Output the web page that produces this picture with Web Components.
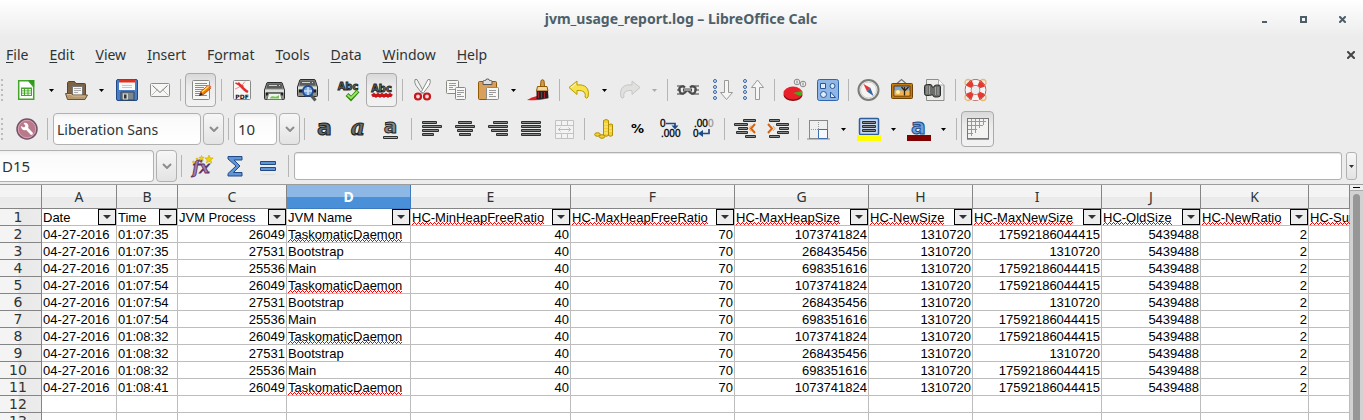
<!DOCTYPE html>
<html lang="en">
<head>
<meta charset="utf-8">
<title>jvm_usage_report.log – LibreOffice Calc</title>
<style>
  html, body { margin: 0; height: 100%; overflow: hidden; background: #ececec; }
  body { font: 14px/18px "Noto Sans", "Open Sans", sans-serif; color: #2e3436; }
</style>
</head>
<body>
<calc-window>
  <calc-titlebar slot="title">jvm_usage_report.log – LibreOffice Calc</calc-titlebar>
  <calc-menubar slot="menu"></calc-menubar>

  <calc-toolbar slot="bars" label="Standard">
    <calc-grip></calc-grip>
    <calc-button icon="new" label="New"></calc-button><calc-more label="New options"></calc-more>
    <calc-button icon="open" label="Open"></calc-button><calc-more label="Recent files"></calc-more>
    <calc-button icon="save" label="Save"></calc-button>
    <calc-button icon="mail" label="Send as email"></calc-button>
    <calc-sep></calc-sep>
    <calc-button icon="edit" label="Edit mode" active></calc-button>
    <calc-sep></calc-sep>
    <calc-button icon="pdf" label="Export as PDF"></calc-button>
    <calc-button icon="print" label="Print"></calc-button>
    <calc-button icon="preview" label="Print preview"></calc-button>
    <calc-sep></calc-sep>
    <calc-button icon="spell" label="Spelling"></calc-button>
    <calc-button icon="autospell" label="Automatic spell checking" active></calc-button>
    <calc-sep></calc-sep>
    <calc-button icon="cut" label="Cut"></calc-button>
    <calc-button icon="copy" label="Copy"></calc-button>
    <calc-button icon="paste" label="Paste"></calc-button><calc-more label="Paste options"></calc-more>
    <calc-button icon="brush" label="Clone formatting"></calc-button>
    <calc-sep></calc-sep>
    <calc-button icon="undo" label="Undo"></calc-button><calc-more label="Undo history"></calc-more>
    <calc-button icon="redo" label="Redo"></calc-button><calc-more label="Redo history" dim></calc-more>
    <calc-sep></calc-sep>
    <calc-button icon="link" label="Hyperlink"></calc-button>
    <calc-button icon="sortdown" label="Sort descending"></calc-button>
    <calc-button icon="sortup" label="Sort ascending"></calc-button>
    <calc-sep></calc-sep>
    <calc-button icon="chart" label="Insert chart"></calc-button>
    <calc-button icon="draw" label="Show draw functions"></calc-button>
    <calc-sep></calc-sep>
    <calc-button icon="compass" label="Navigator"></calc-button>
    <calc-button icon="gallery" label="Gallery"></calc-button>
    <calc-button icon="find" label="Find and replace"></calc-button>
    <calc-sep></calc-sep>
    <calc-button icon="help" label="Help"></calc-button>
  </calc-toolbar>

  <calc-toolbar slot="bars" label="Formatting" class="format">
    <calc-grip></calc-grip>
    <calc-button icon="wrench" label="Styles and formatting"></calc-button>
    <calc-sep></calc-sep>
    <calc-combo label="Font name" value="Liberation Sans" style="--w:148px"></calc-combo>
    <calc-sep></calc-sep>
    <calc-combo label="Font size" value="10" style="--w:43px;--size:15px"></calc-combo>
    <calc-sep></calc-sep>
    <calc-button icon="bold" label="Bold"></calc-button>
    <calc-button icon="italic" label="Italic"></calc-button>
    <calc-button icon="underline" label="Underline"></calc-button>
    <calc-sep></calc-sep>
    <calc-button icon="left" label="Align left"></calc-button>
    <calc-button icon="center" label="Center"></calc-button>
    <calc-button icon="right" label="Align right"></calc-button>
    <calc-button icon="justify" label="Justify"></calc-button>
    <calc-button icon="merge" label="Merge cells"></calc-button>
    <calc-sep></calc-sep>
    <calc-button icon="currency" label="Currency"></calc-button>
    <calc-button icon="percent" label="Percent"></calc-button>
    <calc-button icon="adddec" label="Add decimal place"></calc-button>
    <calc-button icon="deldec" label="Delete decimal place"></calc-button>
    <calc-sep></calc-sep>
    <calc-button icon="outdent" label="Decrease indent"></calc-button>
    <calc-button icon="indent" label="Increase indent"></calc-button>
    <calc-sep></calc-sep>
    <calc-button icon="borders" label="Borders"></calc-button><calc-more label="Border styles"></calc-more>
    <calc-button icon="fill" label="Background color"></calc-button><calc-more label="Background colors"></calc-more>
    <calc-button icon="color" label="Font color"></calc-button><calc-more label="Font colors"></calc-more>
    <calc-sep></calc-sep>
    <calc-button icon="grid" label="Toggle grid lines" active large></calc-button>
  </calc-toolbar>

  <calc-toolbar slot="bars" label="Formula" class="formula">
    <calc-combo label="Name box" value="D15" flush style="--w:154px;--size:15px"></calc-combo>
    <calc-sep></calc-sep>
    <calc-button icon="fx" label="Function wizard"></calc-button>
    <calc-button icon="sum" label="Sum"></calc-button>
    <calc-button icon="equals" label="Function"></calc-button>
    <calc-sep></calc-sep>
    <calc-input></calc-input>
  </calc-toolbar>

  <calc-sheet></calc-sheet>
</calc-window>

<script>
const define = (name, html, setup) => {
  const template = document.createElement('template');
  template.innerHTML = html;
  customElements.define(name, class extends HTMLElement {
    connectedCallback() {
      if (this.shadowRoot) return;
      const root = this.attachShadow({ mode: 'open' });
      root.append(template.content.cloneNode(true));
      if (setup) setup(this, root);
    }
  });
};

/* ---------- icon set, drawn on a 25 x 24 grid ---------- */
const bars = rows => rows.map(([x, y, w]) =>
  `<rect x="${x}" y="${y}" width="${w}" height="3" rx="1" fill="#2b2e2f"/><rect x="${x + 1}" y="${y + 1}" width="${w - 2}" height="1" fill="#858886"/>`).join('');
const page = (x, y, w, h) => `<rect x="${x + .5}" y="${y + .5}" width="${w - 1}" height="${h - 1}" rx="1" fill="#f7f7f5" stroke="#888a85"/>`;
const lines = (x, y, w, n, c = '#999') => Array.from({ length: n }, (_, i) => `<path d="M${x} ${y + i * 2 + .5}h${i % 3 === 2 ? w - 3 : w}" stroke="${c}"/>`).join('');
const printer = `<path d="M4.500 4q0-1.500 1.500-1.500h13q1.500 0 1.500 1.500l2 6v8.500q0 1-1 1h-18q-1 0-1-1v-8.500z" fill="#8f918d" stroke="#2b2d2c"/><path d="M5.500 3.500h14l1 5h-16z" fill="#5a5d5b"/><path d="M7 5.500h8M17 5.500h1" stroke="#d0d2ce"/><path d="M3 9.500h19v3h-19z" fill="#dcdedb"/><path d="M4 12.500h17v3h-17z" fill="#1d1e1e"/>`;
const sortDots = x => [3, 9, 14, 20].map(y => `<circle cx="${x}" cy="${y}" r="1.500" fill="#dfeaf6" stroke="#3465a4"/>`).join('');
const letter = (extra, fill = '#666a69', stroke = '#1c1e1e', size = 22, y = 18) =>
  `<text x="12.500" y="${y}" text-anchor="middle" font-family="DejaVu Sans" font-weight="700" font-size="${size}" fill="${fill}" stroke="${stroke}" stroke-width="1" ${extra}>a</text>`;
const abc = (x, y) => `<text x="${x}" y="${y}" text-anchor="middle" font-family="DejaVu Sans Condensed, DejaVu Sans" font-weight="700" font-size="11" fill="#777a78" stroke="#1d1f1f" stroke-width=".9">Abc</text>`;

const icons = {
  new: `<path d="M4.700 2.700h10l5 6v12.500h-15z" fill="#fff" stroke="#43a62a" stroke-width="1.500"/><path d="M14 2h6.500v7z" fill="#2e9b1c"/><path d="M7 9.500h11v8.500h-11z" fill="#43a62a"/><path d="M8 11h2v1.500h-2zM11 11h2.500v1.500h-2.500zM14.500 11h2.500v1.500h-2.500zM8 13.300h2v1.400h-2zM11 13.300h2.500v1.400h-2.500zM14.500 13.300h2.500v1.400h-2.500zM8 15.600h2v1.400h-2zM11 15.600h2.500v1.400h-2.500zM14.500 15.600h2.500v1.400h-2.500z" fill="#e6f7df"/>`,
  open: `<path d="M3.500 19.500v-15l1-1h6l1.500 2h8.500q1 0 1 1v13z" fill="#7d6343" stroke="#5a4529"/><path d="M8.500 8.500h10v10h-10z" fill="#f5f5f3" stroke="#777"/>${lines(10, 10, 7, 3, '#aaa')}<path d="M1.500 15.500h6l1.500 1.500h14.500l-2.500 4.500h-17.500z" fill="#b79a70" stroke="#6b5335"/><path d="M3 16.500h4l1.500 1.500h13" fill="none" stroke="#d5be98"/>`,
  save: `<rect x="2.500" y="1.500" width="21" height="21" rx="1.500" fill="#4a7ec4" stroke="#204a87"/><path d="M5 2h16v10h-16z" fill="#fafafa"/><path d="M5 1.500h16v3h-16z" fill="#e0301e"/><path d="M8 7.500h10M8 9.500h10" stroke="#c5c5c5"/><path d="M7 14h13v8h-13z" fill="#7c8790" stroke="#38424c"/><path d="M9 15.500h5v6h-5z" fill="#d3d7cf"/><path d="M10 16.500h2.500v4h-2.500z" fill="#2e3436"/>`,
  mail: `<rect x="3.500" y="5.500" width="19" height="13" rx="1" fill="#f6f6f4" stroke="#8d8f8b"/><path d="M4.500 17.500l6-6M21.500 17.500l-6-6" stroke="#bbb"/><path d="M5.500 7.500l7.500 7 7.500-7" fill="none" stroke="#777"/>`,
  edit: `${page(4, 2, 18, 20)}${lines(7, 5, 12, 7, '#8b8d8a')}<path d="M11.500 17.500l1.500-4 7-6 2.500 3-7 6z" fill="#f57900" stroke="#a33c00" stroke-width=".8"/><path d="M14 14l7-6" stroke="#fce94f" stroke-width="1.200"/><path d="M11 18l2-3.500 1.500 2z" fill="#222"/><path d="M20 7.500l1.500-1 2 2.500-1.500 1.500z" fill="#e56a6a"/>`,
  pdf: `${page(4, 2, 18, 20)}<path d="M6.500 5l8 3.500" fill="none" stroke="#df3131" stroke-width="1.500"/><path d="M16 3.500c-2.500 4-6 6-10 7.500" fill="none" stroke="#ee8a8a"/><path d="M9 5c3 3 6 7 10 9" fill="none" stroke="#e02f2f" stroke-width="2.500"/><text x="13" y="20.500" text-anchor="middle" font-family="DejaVu Sans" font-weight="700" font-size="6" fill="#111">PDF</text>`,
  print: `<g transform="translate(0 2)">${printer}<path d="M6.500 13.500h12l1.500 6h-15z" fill="#eef4ea" stroke="#777"/><path d="M8 18c3-4 5 1 9-3v3.500h-9z" fill="#7bc257"/></g>`,
  preview: `<g transform="translate(0 -1)">${printer}</g><path d="M15 16l5.500 6.500" stroke="#555753" stroke-width="3"/><circle cx="13" cy="13" r="5" fill="#77a7dc" stroke="#1f4d91" stroke-width="2"/><path d="M9 13h8M13 9v8" stroke="#cfe2f5" stroke-width="1.500"/>`,
  spell: `${abc(12, 12)}<path d="M11 16.500l4 4 7-7.500" fill="none" stroke="#2f8a09" stroke-width="4"/><path d="M11.500 17l3.500 3 6.500-6.500" fill="none" stroke="#9be86a" stroke-width="1.800"/>`,
  autospell: `${abc(12.5, 14)}<path d="M3 18l2-1.500 2 1.500 2-1.500 2 1.500 2-1.500 2 1.500 2-1.500 2 1.500 2-1.500 2 1.500" fill="none" stroke="#c8141b" stroke-width="3"/>`,
  cut: `<path d="M5 1.500q-1 3 1 6l6 8 1.500-2-6.500-12z" fill="#f3f3f3" stroke="#8a8c88"/><path d="M20 1.500q1 3-1 6l-6 8-1.500-2 6.500-12z" fill="#fff" stroke="#8a8c88"/><circle cx="8" cy="18.500" r="3" fill="#f7dada" stroke="#c4161c" stroke-width="2.200"/><circle cx="17" cy="18.500" r="3" fill="#f7dada" stroke="#c4161c" stroke-width="2.200"/>`,
  copy: `${page(3, 2, 13, 14)}${lines(6, 5, 7, 4)}${page(12, 9, 11, 13)}${lines(14, 12, 7, 4)}`,
  paste: `<rect x="2.500" y="3.500" width="18" height="18" rx="1" fill="#d9a05b" stroke="#8f5902"/><path d="M7 3.500q0-1 1.500-1h1q0-1.500 2-1.500t2 1.500h1q1.500 0 1.500 1v3h-9z" fill="#ddd" stroke="#555"/>${page(10, 9, 13, 13)}${lines(13, 12, 7, 4)}`,
  brush: `<path d="M1 22q5-3 10-4l8 3q-8 2-18 1z" fill="#e31b23"/><path d="M15 2.500q1.500-1.500 3 0l.5 6h-4z" fill="#d99a4e" stroke="#8f5902"/><path d="M11.500 8.500h9.500l1 4.500h-11.500z" fill="#f0d8a8" stroke="#8f5902"/><path d="M10.500 13h11.500l.5 7q-1 1-12 1z" fill="#2a2023"/><path d="M12.500 14v6M15.500 14v6M18.500 14v6" stroke="#a22"/>`,
  undo: `<path d="M2 9.500l8-6.500v4c8-1 13 3 11 12q-1 2.500-3 0c1-4-1-7-8-6.500v4z" fill="#f7e14c" stroke="#b59a06" stroke-linejoin="round"/><path d="M4 9.500l5-4" stroke="#fffbd0"/>`,
  redo: `<path d="M23 9.500l-8-6.500v4c-8-1-13 3-11 12q1 2.500 3 0c-1-4 1-7 8-6.500v4z" fill="#e0e0df" stroke="#c6c6c5" stroke-linejoin="round"/>`,
  link: `<path d="M2 8h7M2 12h4M2 16h7M16 8h8M19 12h5M16 16h8" stroke="#777" stroke-width="1.300"/><g fill="none"><path d="M10 9.500q-2-2-4.500-.5t0 6q2.500 1.500 4.500-.5l2-2.500M15 9.500q2-2 4.500-.5t0 6q-2.500 1.500-4.500-.5l-2-2.500" stroke="#4a4c4b" stroke-width="2.200"/><path d="M8 12h9" stroke="#4a4c4b" stroke-width="3"/><path d="M9 12h7" stroke="#ddd"/></g>`,
  sortdown: `${sortDots(7)}<path d="M16.500 2.500h4v12h4l-6 7-6-7h4z" fill="#f6f6f5" stroke="#999b97" stroke-linejoin="round"/>`,
  sortup: `${sortDots(4)}<path d="M14.500 21.500h4v-12h4l-6-7.500-6 7.500h4z" fill="#f6f6f5" stroke="#999b97" stroke-linejoin="round"/>`,
  chart: `<ellipse cx="11" cy="17" rx="9.500" ry="6" fill="#8e0b10"/><ellipse cx="11" cy="15" rx="9.500" ry="6.500" fill="#e8202a"/><path d="M11 15l9-2q1 3-1.500 5z" fill="#3fae1c"/><circle cx="15" cy="4" r="2.800" fill="#f2f2f2" stroke="#888"/><circle cx="21" cy="6" r="2.800" fill="#f2f2f2" stroke="#888"/><path d="M15 2.500v3M21 4.500v3" stroke="#777"/>`,
  draw: `<rect x="2.500" y="1.500" width="21" height="21" rx="2" fill="#8fb6e5" stroke="#2f66ad"/><g fill="#dfeaf8" stroke="#26579a"><path d="M5.500 5.500h5v5h-5zM15.500 19.500v-5.500l5 5.500z"/><circle cx="17.500" cy="8" r="2.500"/><circle cx="8.500" cy="16.500" r="3"/></g>`,
  compass: `<circle cx="12.500" cy="12" r="10" fill="#f4f4f2" stroke="#7a7c78" stroke-width="2"/><circle cx="12.500" cy="12" r="8" fill="none" stroke="#ccc"/><path d="M7.500 6l7 4-3.500 3.500z" fill="#e2353b"/><path d="M17.500 18l-3-8-3.500 3.500z" fill="#3465a4"/>`,
  gallery: `<path d="M8 5.500l4.500-4 4.500 4" fill="none" stroke="#777" stroke-width="1.300"/><rect x="2.500" y="5.500" width="21" height="15" rx="1" fill="#c67a0c" stroke="#6e4204"/><path d="M5 8h16v10h-16z" fill="#7aa7d8" stroke="#5e3a05"/><path d="M5.500 12.500h15v5h-15z" fill="#f2b353"/><circle cx="9" cy="14" r="2" fill="#fff3a6"/><path d="M15.500 17.500v-5l-3-3.500M15.500 13l4-4M15.500 12v-3" stroke="#33230d" stroke-width="1.300" fill="none"/>`,
  find: `<path d="M4.500 1.500h12l5.500 5.500v15.500h-17.500z" fill="#ececea" stroke="#8d8f8b"/><path d="M16.500 1.500v5.500h5.500" fill="#fff" stroke="#aaa"/><path d="M2.500 8.500q0-2 3-2h2.500q2 0 2 1.500v1h2q0-2 2.500-2h1q3 0 3 2v8q0 2-3 2h-2.500q-2 0-2-2h-2q0 .5-1.500.500h-3q-2 0-2-2z" fill="#6a6d6a" stroke="#2b2d2c"/><path d="M5 8v8M7.500 8v8M13.500 9v8M16 9v8" stroke="#a4a7a2"/>`,
  help: `<g fill="none" stroke="#e9b96e" stroke-width="1.300"><circle cx="5" cy="4.500" r="3"/><circle cx="20" cy="4.500" r="3"/><circle cx="5" cy="19.500" r="3"/><circle cx="20" cy="19.500" r="3"/></g><circle cx="12.500" cy="12" r="7.500" fill="none" stroke="#a8201c" stroke-width="6.500"/><circle cx="12.500" cy="12" r="7.500" fill="none" stroke="#f4f4f3" stroke-width="5.500"/><circle cx="12.500" cy="12" r="7.500" fill="none" stroke="#e43a30" stroke-width="5.500" stroke-dasharray="5.890 5.890" stroke-dashoffset="-2.950"/>`,

  wrench: `<circle cx="13" cy="12" r="10" fill="#b9798a" stroke="#75506b" stroke-width="1.500"/><circle cx="13" cy="12" r="8.700" fill="none" stroke="#d6a3b0"/><path d="M9.500 6q4-1 5 3l-.3 2 4.800 5q0 2-2 2l-4.800-5q-5 1-5.200-4l3 1.500 1.500-1.500z" fill="#fff"/>`,
  bold: letter(''),
  italic: `<text x="13" y="18" text-anchor="middle" font-family="DejaVu Serif" font-weight="700" font-style="italic" font-size="22" fill="#6a6d6b" stroke="#1c1e1e" stroke-width="1">a</text>`,
  underline: letter('', '#8a8d8c', '#222', 20, 16) + `<rect x="5" y="19" width="15" height="3" rx="1" fill="#2b2e2f"/><path d="M6 20.500h13" stroke="#aaa"/>`,
  left: bars([[3, 4, 15], [3, 8, 20], [3, 12, 17], [3, 16, 12]]),
  center: bars([[6, 4, 14], [3, 8, 20], [5, 12, 16], [7, 16, 12]]),
  right: bars([[8, 4, 15], [3, 8, 20], [6, 12, 17], [11, 16, 12]]),
  justify: bars([[3, 4, 20], [3, 8, 20], [3, 12, 20], [3, 16, 20]]),
  merge: `<path d="M4.500 3.500h18v18h-18zM4.500 8.500h18M4.500 16.500h18M10.500 3.500v5M16.500 3.500v5M10.500 16.500v5M16.500 16.500v5" fill="#f3f3f3" stroke="#c2c2c2"/><path d="M7.500 12.500h12M9.500 10.500l-2 2 2 2M17.500 10.500l2 2-2 2" fill="none" stroke="#b9b9b9"/>`,
  currency: `<g fill="#f3cf2d" stroke="#b08d04"><path d="M11.500 3.500q3-2 5 0v15q-2 1.500-5 0z"/><path d="M16.500 7.500q3-1 4 0v11q-2 1.500-4 0z"/><ellipse cx="5.500" cy="17.500" rx="2.800" ry="1.800"/><ellipse cx="10" cy="19.500" rx="2.800" ry="1.800"/></g><path d="M12 7h4M12 10h4M12 13h4M12 16h4M17 11h3M17 14h3" stroke="#fbee9a"/>`,
  percent: `<text x="12.500" y="16" text-anchor="middle" font-family="DejaVu Sans" font-weight="700" font-size="13" fill="#000">%</text>`,
  adddec: `<g font-family="Liberation Sans" font-size="10" fill="#000" stroke="#000" stroke-width=".3"><text x="2" y="10">0</text><text x="3" y="20">.000</text></g><path d="M8 6.500h9v4" fill="none" stroke="#204a87" stroke-width="1.700"/><path d="M13.500 8.500h7l-3.500 4z" fill="#204a87"/>`,
  deldec: `<g font-family="Liberation Sans" font-size="10" fill="#000" stroke="#000" stroke-width=".3"><text x="3" y="10">.00<tspan fill="#999" stroke="#999">0</tspan></text><text x="2" y="20">0</text></g><path d="M18 12v4.500h-7" fill="none" stroke="#204a87" stroke-width="1.700"/><path d="M12 13v7l-5-3.500z" fill="#204a87"/>`,
  outdent: bars([[11, 2, 13], [2, 6, 14], [6, 10, 10], [4, 14, 12], [13, 18, 11]]) + `<path d="M23 7l-4 4.500 4 4.500" fill="none" stroke="#d9640b" stroke-width="2"/><path d="M19 8.500l-2 3 2 3" fill="none" stroke="#f0a060"/>`,
  indent: bars([[4, 2, 11], [11, 6, 13], [14, 10, 10], [12, 14, 12], [4, 18, 11]]) + `<path d="M3 7l4 4.500-4 4.500" fill="none" stroke="#d9640b" stroke-width="2"/><path d="M8 9l2 2.500-2 2.500" fill="none" stroke="#f0a060"/>`,
  borders: `<path d="M1 21h23v2h-23z" fill="#bbb"/><rect x="3.500" y="3.500" width="18" height="18" fill="#eef0ef" stroke="#888"/><path d="M12.500 5v8M5 12.500h8" stroke="#999" stroke-dasharray="1 1"/><path d="M12.500 21.500v-9h9v9z" fill="#f5f8fc" stroke="#3f6fae"/>`,
  fill: `<rect x="3.500" y="1.500" width="19" height="16" rx="1" fill="#c5d9f3" stroke="#2f5c9c" stroke-width="1.500"/>${bars([[6, 4, 14], [6, 8, 14], [6, 12, 14]])}<rect x="1" y="18" width="24" height="6" fill="#ff0"/>`,
  color: letter('', '#6f9fd8', '#204a87', 22, 17) + `<rect x="1" y="18" width="24" height="6" fill="#7e0000"/>`,
  grid: `<rect x="2.500" y="1.500" width="21" height="20" fill="#f3f3f1" stroke="#777"/><path d="M3 4.500h18M3 8.500h15M3 12.500h9M3 16.500h5M6.500 2v17M10.500 2v14M14.500 2v9M18.500 2v6" stroke="#999"/><path d="M2 22.500h22" stroke="#999"/>`,

  fx: `<text x="12" y="19" text-anchor="middle" font-family="DejaVu Serif" font-weight="700" font-style="italic" font-size="17" fill="#a87fae" stroke="#5c3566" stroke-width=".9">fx</text><g fill="#edd400" stroke="#c4a000" stroke-width=".5"><path d="M20 1l1.200 2.800 3 .2-2.300 2 .8 3-2.700-1.600-2.700 1.600.8-3-2.300-2 3-.2z"/><path d="M12.500 1.500l.8 1.800 1.900.1-1.500 1.200.5 1.900-1.700-1-1.700 1 .5-1.900-1.500-1.200 1.900-.1z"/><circle cx="8" cy="5" r="1"/><circle cx="4.500" cy="8" r="1"/></g>`,
  sum: `<path d="M6 2.500h14v3.500h-8l6 6-6.500 6.500h8.500v3.500h-14v-2.500l8-7.500-8-7z" fill="#5f95d5" stroke="#204a87"/>`,
  equals: `<path d="M5.500 7.500h15v3h-15zM5.500 13.500h15v3h-15z" fill="#5f95d5" stroke="#204a87"/><path d="M6 20.500h14" stroke="#ddd"/>`
};

define('calc-icon', `
  <style>:host { display: block; width: 25px; height: 24px } svg { display: block }</style>`,
  (host, root) => root.innerHTML += `<svg width="25" height="24" viewBox="0 0 25 24" aria-hidden="true">${icons[host.getAttribute('name')] || ''}</svg>`);

define('calc-window', `
  <style>
    :host { display: flex; flex-direction: column; height: 100vh; overflow: hidden;
      background: linear-gradient(#fff 0, #ececec 37px) }
    ::slotted(calc-sheet) { flex: 1; min-height: 0 }
  </style>
  <slot name="title"></slot><slot name="menu"></slot><slot name="bars"></slot><slot></slot>`);

define('calc-titlebar', `
  <style>
    :host { display: grid; grid-template-columns: 1fr auto 1fr; align-items: center; height: 38px; padding-right: 1px; flex: none; color: #4d6069 }
    h1 { grid-column: 2; margin: 0; font: 700 14px/18px "Noto Sans", sans-serif }
    div { display: flex; justify-content: flex-end }
    button { width: 39px; height: 30px; border: 0; padding: 0; background: none; color: inherit; display: grid; place-items: center }
    svg { display: block }
  </style>
  <h1><slot></slot></h1>
  <div>
    <button aria-label="Minimize"><svg width="5" height="7"><path d="M0 5h5v2h-5z" fill="currentColor"/></svg></button>
    <button aria-label="Maximize"><svg width="7" height="7"><path d="M1 1h5v5h-5z" fill="#f8f8f8" stroke="currentColor" stroke-width="2"/></svg></button>
    <button aria-label="Close"><svg width="7" height="7"><path d="M1 1l5 5M6 1l-5 5" stroke="currentColor" stroke-width="2" stroke-linecap="square"/></svg></button>
  </div>`);

define('calc-menubar', `
  <style>
    :host { display: flex; align-items: center; justify-content: space-between; height: 34px; flex: none }
    nav { display: flex; gap: 1px; margin-left: -4px }
    button { border: 0; background: none; font: inherit; color: inherit; padding: 4px 10px }
    u { text-decoration: underline; text-underline-offset: 2px; text-decoration-skip-ink: none }
    .close { width: 24px; height: 24px; padding: 0; display: grid; place-items: center }
    svg { display: block }
  </style>
  <nav aria-label="Menu"></nav>
  <button class="close" aria-label="Close document"><svg width="8" height="8"><path d="M1 1l6 6M7 1l-6 6" stroke="#454545" stroke-width="2" stroke-linecap="square"/></svg></button>`,
  (host, root) => {
    const menus = ['_File', '_Edit', '_View', '_Insert', 'F_ormat', '_Tools', '_Data', '_Window', '_Help'];
    root.querySelector('nav').innerHTML = menus.map(m => `<button>${m.replace(/_(.)/, '<u>$1</u>')}</button>`).join('');
  });

define('calc-toolbar', `
  <style>
    :host { display: flex; align-items: center; height: 36px; flex: none; box-sizing: border-box }
    :host(.format) { height: 41px; padding-top: 1px }
    :host(.formula) { height: 35px; padding-bottom: 1px }
  </style>
  <slot></slot>`,
  host => { host.setAttribute('role', 'toolbar'); host.setAttribute('aria-label', host.getAttribute('label')); });

define('calc-grip', `
  <style>
    :host { display: block; flex: none; width: 10px; height: 22px }
    i { display: block; width: 2px; height: 22px; margin-left: 1px; background: repeating-linear-gradient(#bcbcbc 0 2px, transparent 2px 5px) }
  </style><i></i>`);

define('calc-sep', `
  <style>
    :host { display: block; flex: none; width: 8px }
    i { display: block; width: 1px; height: 22px; margin-left: 4px; background: #b5b5b5 }
  </style><i></i>`);

define('calc-button', `
  <style>
    :host { display: block; flex: none; padding: 0 1px }
    button { display: grid; place-items: center; width: 31px; height: 34px; padding: 0; border: 1px solid transparent; border-radius: 4px; background: none }
    :host([active]) button { border-color: #aaa; background: linear-gradient(#d9d9d9, #ececec 40%, #f2f2f2) }
    :host([large]) button { width: 33px; height: 36px }
  </style>
  <button></button>`,
  (host, root) => {
    const b = root.querySelector('button');
    b.setAttribute('aria-label', host.getAttribute('label'));
    b.innerHTML = `<calc-icon name="${host.getAttribute('icon')}"></calc-icon>`;
  });

define('calc-more', `
  <style>
    :host { display: block; flex: none; color: #000 }
    :host([dim]) { color: #aaa }
    button { display: grid; place-items: center; width: 17px; height: 34px; padding: 0; border: 0; background: none; color: inherit }
  </style>
  <button><svg width="5" height="3"><path d="M0 0h5L2.500 3z" fill="currentColor"/></svg></button>`,
  (host, root) => root.querySelector('button').setAttribute('aria-label', host.getAttribute('label')));

define('calc-combo', `
  <style>
    :host { display: flex; flex: none; gap: 2px; padding-left: 2px }
    :host([flush]) { padding-left: 0 }
    input, button { box-sizing: border-box; height: 32px; border: 1px solid #b1b1b1; border-radius: 4px }
    input { width: var(--w); padding: 0 3px; font: var(--size, 14px)/20px "Noto Sans", sans-serif; color: #2e3436;
      background: linear-gradient(#f0f0f0, #fafafa 4px, #fff); outline: 0 }
    :host([flush]) input { border-left: 0; border-radius: 0 4px 4px 0; padding-left: 2px }
    button { width: 21px; padding: 0; display: grid; place-items: center; background: linear-gradient(#f7f7f7, #e3e3e3) }
  </style>
  <input type="text"><button aria-label="Show list"><svg width="10" height="6"><path d="M1 1l4 4 4-4" fill="none" stroke="#8d8d8d" stroke-width="2"/></svg></button>`,
  (host, root) => {
    const input = root.querySelector('input');
    input.value = host.getAttribute('value');
    input.setAttribute('aria-label', host.getAttribute('label'));
  });

define('calc-input', `
  <style>
    :host { display: flex; flex: 1; gap: 4px; padding: 0 6px 0 2px }
    input, button { box-sizing: border-box; height: 28px; border: 1px solid #b1b1b1; border-radius: 3px }
    input { flex: 1; min-width: 0; padding: 0 6px; background: #fff; box-shadow: inset 0 1px 1px #e4e4e4; outline: 0 }
    button { width: 11px; padding: 0; display: grid; place-items: center; background: linear-gradient(#f7f7f7, #e3e3e3) }
  </style>
  <input type="text" aria-label="Input line">
  <button aria-label="Expand formula bar"><svg width="5" height="3"><path d="M0 0h5L2.500 3z" fill="#2e3436"/></svg></button>`);

define('calc-filter', `
  <style>
    :host { display: block; flex: none }
    button { box-sizing: border-box; display: grid; place-items: center; width: 18px; height: 16px; padding: 0; border: 1px solid #000; background: #ededed }
  </style>
  <button aria-label="Filter"><svg width="8" height="4"><path d="M0 0h8L4 4z" fill="#2e3436"/></svg></button>`);

define('calc-scrollbar', `
  <style>
    :host { display: flex; flex-direction: column; flex: none; width: 13px; background: #d2d2d2 }
    .split { height: 6px; display: grid; place-items: center; background: #f0f0f0; border-bottom: 1px solid #aaa; box-sizing: border-box }
    .split i { width: 7px; height: 1px; background: #000 }
    .thumb { flex: 1; width: 7px; margin: 3px 0 0 3px; border-radius: 4px 4px 0 0; background: #979797 }
  </style>
  <div class="split"><i></i></div><div class="thumb"></div>`);

define('calc-sheet', `
  <style>
    :host { display: flex; border-top: 1px solid #9c9c9c; background: #fff; overflow: hidden }
    .view { flex: 1; min-width: 0; overflow: hidden }
    table { width: 100%; table-layout: fixed; border-collapse: separate; border-spacing: 0 }
    th, td { box-sizing: border-box; padding: 0; white-space: nowrap }
    td { height: 17px; border: solid #bdbdbd; border-width: 0 1px 1px 0; padding: 1px 1px 0; font: 13px/15px "Liberation Sans", Arial, sans-serif; color: #000; text-align: left }
    td.num { text-align: right }
    td.head { padding: 0 0 0 1px }
    td > div { display: flex; justify-content: space-between; align-items: flex-end; height: 16px }
    thead th { height: 24px; font-weight: 400; line-height: 23px; border: solid #858585; border-width: 0 1px 1px 0;
      background: linear-gradient(#f4f4f4 12px, #e9e9e9 12px, #ececec) }
    thead th.on { color: #fff; font-weight: 700; border-color: #3d7cc0; background: linear-gradient(#8db8e6 12px, #4a90d9 12px) }
    tbody th { height: 17px; padding-right: 5px; font: 14px/16px "DejaVu Sans", sans-serif; border: solid #858585; border-width: 0 1px 1px 0;
      background: linear-gradient(90deg, #f4f4f4 18px, #e9e9e9 19px, #ececec) }
    .bad { display: inline-block; height: 15px; vertical-align: top;
      background: url("data:image/svg+xml,%3Csvg xmlns='http://www.w3.org/2000/svg' width='4' height='3'%3E%3Cpath d='M0 2h1v1h-1zM1 1h1v1h-1zM2 0h1v1h-1zM3 1h1v1h-1z' fill='red' shape-rendering='crispEdges'/%3E%3C/svg%3E") left bottom / 4px 3px repeat-x }
  </style>
  <div class="view"><table></table></div>
  <calc-scrollbar></calc-scrollbar>`,
  (host, root) => {
    const widths = [42, 75, 61, 109, 124, 160, 164, 134, 104, 129, 99, 108];
    const heads = ['Date', 'Time', 'JVM Process', 'JVM Name', 'HC-MinHeapFreeRatio', 'HC-MaxHeapFreeRatio', 'HC-MaxHeapSize', 'HC-NewSize', 'HC-MaxNewSize', 'HC-OldSize', 'HC-NewRatio', 'HC-Sur'];
    const procs = [
      ['26049', 'TaskomaticDaemon', '40', '70', '1073741824', '1310720', '17592186044415', '5439488', '2', ''],
      ['27531', 'Bootstrap', '40', '70', '268435456', '1310720', '1310720', '5439488', '2', ''],
      ['25536', 'Main', '40', '70', '698351616', '1310720', '17592186044415', '5439488', '2', '']
    ];
    const times = ['01:07:35', '01:07:35', '01:07:35', '01:07:54', '01:07:54', '01:07:54', '01:08:32', '01:08:32', '01:08:32', '01:08:41'];
    const mark = t => /^HC-|Daemon/.test(t) ? `<span class="bad">${t}</span>` : `<span>${t}</span>`;
    const row = (n, cells) => `<tr><th scope="row">${n}</th>${cells}</tr>`;
    let body = row(1, heads.map((h, i) => `<td class="head"><div>${mark(h)}${i < 11 ? '<calc-filter></calc-filter>' : ''}</div></td>`).join(''));
    times.forEach((time, r) => {
      const cells = ['04-27-2016', time, ...procs[r % 3]];
      body += row(r + 2, cells.map((c, i) => `<td${i === 2 || i > 3 ? ' class="num"' : ''}>${c && mark(c)}</td>`).join(''));
    });
    for (let n = 12; n < 14; n++) body += row(n, '<td></td>'.repeat(12));
    root.querySelector('table').innerHTML =
      `<colgroup>${widths.map(w => `<col style="width:${w}px">`).join('')}<col></colgroup>
       <thead><tr><th></th>${[...'ABCDEFGHIJK'].map(c => `<th scope="col"${c === 'D' ? ' class="on"' : ''}>${c}</th>`).join('')}<th></th></tr></thead><tbody>${body}</tbody>`;
  });
</script>
</body>
</html>
